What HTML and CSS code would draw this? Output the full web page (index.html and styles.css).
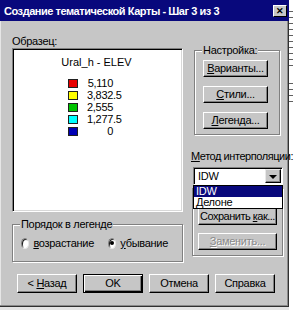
FILE: index.html
```html
<!DOCTYPE html>
<html>
<head>
<meta charset="utf-8">
<link rel="stylesheet" href="styles.css">
</head>
<body>
<div class="screen">
  <div class="dialog">
    <div class="titlebar">
      <span class="title">Создание тематической Карты - Шаг 3 из 3</span>
      <span class="close">✕</span>
    </div>
    <div class="content">
      <div class="main">
        <div class="left">
          <div class="label">Образец:</div>
          <div class="preview">
            <div class="legend-title">Ural_h - ELEV</div>
            <div class="legend">
              <div class="row"><span class="sw red"></span><span class="int">5,110</span></div>
              <div class="row"><span class="sw yellow"></span><span class="int">3,832</span><span>.5</span></div>
              <div class="row"><span class="sw green"></span><span class="int">2,555</span></div>
              <div class="row"><span class="sw cyan"></span><span class="int">1,277</span><span>.5</span></div>
              <div class="row"><span class="sw blue"></span><span class="int">0</span></div>
            </div>
          </div>
          <div class="group order">
            <div class="group-title">Порядок в легенде</div>
            <div class="radios">
              <span class="radio"></span><span class="rlabel"><u>в</u>озрастание</span>
              <span class="radio checked"></span><span class="rlabel"><u>у</u>бывание</span>
            </div>
          </div>
        </div>
        <div class="right">
          <div class="group settings">
            <div class="group-title">Настройка:</div>
            <div class="btn-col">
              <div class="btn"><span><u>В</u>арианты...</span></div>
              <div class="btn"><span><u>С</u>тили...</span></div>
              <div class="btn"><span><u>Л</u>егенда...</span></div>
            </div>
          </div>
          <div class="label method"><u>М</u>етод интерполяции:</div>
          <div class="combo-wrap">
            <div class="combo">
              <span class="combo-text">IDW</span>
              <span class="combo-arrow"><span class="tri"></span></span>
            </div>
            <div class="dropdown">
              <div class="opt sel">IDW</div>
              <div class="opt">Делоне</div>
            </div>
          </div>
          <div class="frame">
            <div class="btn wide save"><span>Сохранить <u>к</u>ак...</span></div>
            <div class="btn wide disabled"><span><u>З</u>аменить...</span></div>
          </div>
        </div>
      </div>
      <div class="footer">
        <div class="btn fbtn"><span>&lt; <u>Н</u>азад</span></div>
        <div class="btn fbtn default"><span>OK</span></div>
        <div class="btn fbtn"><span>Отмена</span></div>
        <div class="btn fbtn"><span>Справка</span></div>
      </div>
    </div>
  </div>
  <div class="strip"></div>
</div>
</body>
</html>
```

FILE: styles.css
```css
html, body {
  margin: 0;
  padding: 0;
  background: #e4e4e4;
}
body {
  font-family: "Liberation Sans", Arial, sans-serif;
  font-size: 11px;
  letter-spacing: -0.3px;
  color: #000;
}
.screen {
  display: flex;
  width: 294px;
  height: 310px;
  overflow: hidden;
}
.dialog {
  width: 289px;
  height: 307px;
  flex: none;
  box-sizing: border-box;
  background: #c6c6c6;
  box-shadow: inset -1px -1px 0 #303030, inset -2px -2px 0 #8a8a8a, inset 1px 0 0 #e6e6e6;
  position: relative;
  z-index: 1;
}
.strip {
  flex: 1;
  background:
    repeating-linear-gradient(to bottom, transparent 0 3px, #606060 3px 4px, transparent 4px 6px) 0 8px / 4px 60px no-repeat,
    repeating-linear-gradient(to bottom, transparent 0 3px, #606060 3px 4px, transparent 4px 6px) 0 80px / 4px 24px no-repeat,
    #ffffff;
}
.titlebar {
  height: 21px;
  background: #08087c;
  display: flex;
  align-items: center;
  justify-content: space-between;
  padding: 0 2px 0 4px;
}
.title {
  color: #fff;
  font-weight: bold;
  font-size: 11px;
  white-space: nowrap;
  letter-spacing: -0.45px;
}
.close {
  width: 14px;
  height: 12px;
  box-sizing: border-box;
  background: #c6c6c6;
  border: 1px solid;
  border-color: #fff #000 #000 #fff;
  font-size: 9px;
  line-height: 10px;
  text-align: center;
  font-weight: bold;
  color: #000;
  letter-spacing: 0;
}
.content {
  padding: 14px 5px 0 12px;
}
.main {
  display: flex;
  gap: 9px;
  align-items: flex-start;
}
.left {
  width: 171px;
}
.label {
  line-height: 13px;
  height: 13px;
  white-space: nowrap;
}
.preview {
  height: 164px;
  box-sizing: border-box;
  background: #fff;
  border: 1px solid;
  border-color: #808080 #fff #fff #808080;
  box-shadow: inset 1px 1px 0 #000, inset -1px -1px 0 #d8d8d8;
  padding-top: 7px;
}
.legend-title {
  text-align: center;
  line-height: 13px;
  padding-right: 2px;
  letter-spacing: 0;
}
.legend {
  margin-top: 8px;
  padding-left: 55px;
}
.row {
  height: 12px;
  display: flex;
  align-items: center;
  line-height: 12px;
}
.sw {
  width: 10px;
  height: 9px;
  box-sizing: border-box;
  border: 1px solid #202020;
  margin-right: 9px;
}
.red { background: #e80000; }
.yellow { background: #ffff00; }
.green { background: #00c400; }
.cyan { background: #00ffff; }
.blue { background: #0000b4; }
.int {
  display: inline-block;
  width: 26px;
  text-align: right;
}
.group {
  box-sizing: border-box;
  border: 1px solid #808080;
  box-shadow: inset 1px 1px 0 #fff, 1px 1px 0 #fff;
}
.group-title {
  width: fit-content;
  margin-top: -7px;
  margin-left: 7px;
  padding: 0 1px;
  line-height: 13px;
  background: #c6c6c6;
  white-space: nowrap;
}
.order {
  margin-top: 12px;
  width: 171px;
  height: 38px;
}
.radios {
  display: flex;
  align-items: center;
  margin-top: 6px;
  padding-left: 8px;
}
.radio {
  width: 11px;
  height: 11px;
  box-sizing: border-box;
  border-radius: 50%;
  background: #fff;
  border: 1px solid;
  border-color: #808080 #e8e8e8 #e8e8e8 #808080;
  box-shadow: inset 1px 1px 0 #202020;
  display: flex;
  align-items: center;
  justify-content: center;
}
.radio.checked::after {
  content: "";
  width: 4px;
  height: 4px;
  border-radius: 50%;
  background: #000;
}
.rlabel {
  margin-left: 4px;
  margin-right: 14px;
}
.right {
  width: 91px;
}
.settings {
  margin: 15px 3px 0 2px;
  height: 85px;
}
.btn-col {
  display: flex;
  flex-direction: column;
  gap: 9px;
  margin: 3px 0 0 8px;
}
.btn {
  height: 17px;
  box-sizing: border-box;
  background: #c6c6c6;
  border: 1px solid;
  border-color: #fff #000 #000 #fff;
  box-shadow: inset -1px -1px 0 #808080;
  display: flex;
  align-items: center;
  justify-content: center;
  white-space: nowrap;
  padding-bottom: 1px;
}
.btn-col .btn {
  width: 65px;
}
.method {
  margin-top: 15px;
  margin-left: -1px;
  letter-spacing: -0.45px;
}
.combo-wrap {
  position: relative;
  margin: 4px 0 0 1px;
}
.combo {
  height: 18px;
  box-sizing: border-box;
  background: #fff;
  border: 1px solid;
  border-color: #808080 #fff #fff #808080;
  box-shadow: inset 1px 1px 0 #000;
  display: flex;
  align-items: center;
  justify-content: space-between;
  padding: 1px 1px 1px 4px;
}
.combo-text {
  line-height: 13px;
}
.combo-arrow {
  width: 16px;
  height: 14px;
  box-sizing: border-box;
  background: #c6c6c6;
  border: 1px solid;
  border-color: #e8e8e8 #000 #000 #e8e8e8;
  box-shadow: inset -1px -1px 0 #808080;
  display: flex;
  align-items: center;
  justify-content: center;
}
.tri {
  width: 0;
  height: 0;
  border-left: 4px solid transparent;
  border-right: 4px solid transparent;
  border-top: 4px solid #000;
  margin-top: 1px;
}
.dropdown {
  position: absolute;
  left: 0;
  right: 0;
  top: 18px;
  box-sizing: border-box;
  height: 24px;
  border: 1px solid #000;
  background: #fff;
  z-index: 2;
}
.opt {
  height: 11px;
  line-height: 11px;
  padding-left: 2px;
}
.opt.sel {
  background: #08087c;
  color: #fff;
}
.frame {
  margin-top: 3px;
  height: 68px;
  box-sizing: border-box;
  border: 1px solid #808080;
  box-shadow: inset 1px 1px 0 #fff, 1px 1px 0 #fff;
  padding: 19px 0 0 5px;
  display: flex;
  flex-direction: column;
  gap: 8px;
}
.btn.wide {
  width: 79px;
}
.btn.save {
  letter-spacing: -0.5px;
}
.btn.disabled {
  color: #8a8a8a;
  text-shadow: 1px 1px 0 #fff;
}
.footer {
  display: flex;
  gap: 6px;
  margin: 12px 0 0 5px;
}
.fbtn {
  width: 60px;
  height: 19px;
}
.fbtn.default {
  border: 1px solid #000;
  box-shadow: inset 1px 1px 0 #fff, inset -1px -1px 0 #000, inset -2px -2px 0 #808080;
}
```
